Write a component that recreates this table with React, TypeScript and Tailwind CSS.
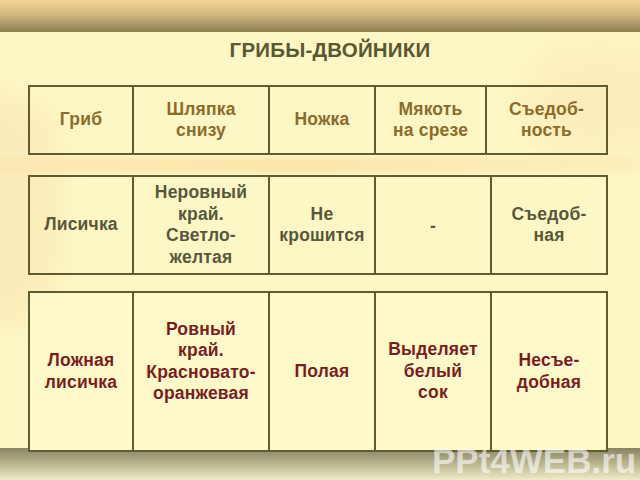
import React from "react";

const font = { fontFamily: '"Liberation Sans", Arial, sans-serif' };

type Cell = { lines: string[]; extra?: string };

function Table({
  cols,
  cells,
  height,
  color,
  extraClass,
}: {
  cols: string;
  cells: Cell[];
  height: string;
  color: string;
  extraClass?: string;
}) {
  return (
    <div
      className={`relative z-10 ml-[28px] w-[580px] border-2 border-[#5e5c30] grid ${cols} ${height} ${extraClass ?? ""}`}
    >
      {cells.map((c, i) => (
        <div
          key={i}
          className={`flex items-center justify-center text-center text-[17.5px] leading-[21.5px] font-bold tracking-[0.2px] ${color} ${
            i < cells.length - 1 ? "border-r-2 border-[#5e5c30]" : ""
          } ${c.extra ?? ""}`}
        >
          <div>
            {c.lines.map((l, j) => (
              <div key={j}>{l}</div>
            ))}
          </div>
        </div>
      ))}
    </div>
  );
}

export default function App() {
  return (
    <div
      className="relative w-[640px] h-[480px] overflow-hidden bg-[#fdf7c6] flex flex-col"
      style={font}
    >
      {/* decorative background swirls */}
      <div className="absolute left-0 top-[157px] w-[640px] h-[16px] bg-gradient-to-r from-[#fde6ad] via-[#fbe3a4] to-[#fdf0bd] opacity-80 blur-[2px]" />
      <div className="absolute left-[-60px] top-[90px] w-[120px] h-[240px] rounded-full bg-[#fbe7b2] opacity-60 blur-[12px]" />
      <div className="absolute left-[520px] top-[40px] w-[160px] h-[120px] rounded-full bg-[#fbe7b2] opacity-50 blur-[16px]" />

      {/* top bar */}
      <div className="relative z-10 h-[32px] shrink-0 bg-gradient-to-b from-[#f3d594] via-[#cdb37b] to-[#8c7e52]" />

      {/* title */}
      <div className="relative z-10 mt-[6px] h-[24px] pl-[20px] text-center text-[20.5px] leading-[24px] font-bold tracking-[0.2px] text-[#5a5830]">
        ГРИБЫ-ДВОЙНИКИ
      </div>

      <div className="mt-[23px]" />
      <Table
        cols="grid-cols-[104px_136px_106px_111px_119px]"
        height="h-[70px]"
        color="text-[#8b6b2b]"
        cells={[
          { lines: ["Гриб"] },
          { lines: ["Шляпка", "снизу"] },
          { lines: ["Ножка"] },
          { lines: ["Мякоть", "на срезе"] },
          { lines: ["Съедоб-", "ность"] },
        ]}
      />

      <div className="mt-[20px]" />
      <Table
        cols="grid-cols-[104px_136px_106px_116px_114px]"
        height="h-[100px]"
        color="text-[#58573a]"
        cells={[
          { lines: ["Лисичка"] },
          { lines: ["Неровный", "край.", "Светло-", "желтая"] },
          { lines: ["Не", "крошится"] },
          { lines: ["-"], extra: "pt-[4px]" },
          { lines: ["Съедоб-", "ная"] },
        ]}
      />

      <div className="mt-[16px]" />
      <Table
        cols="grid-cols-[104px_136px_106px_116px_114px]"
        height="h-[161px]"
        color="text-[#7b1d12] [text-shadow:0_1px_1px_rgba(255,255,255,0.9)]"
        extraClass="bg-[#fdf9c8] mb-[-4px]"
        cells={[
          { lines: ["Ложная", "лисичка"] },
          { lines: ["Ровный", "край.", "Красновато-", "оранжевая"], extra: "pb-[20px]" },
          { lines: ["Полая"] },
          { lines: ["Выделяет", "белый", "сок"] },
          { lines: ["Несъе-", "добная"] },
        ]}
      />

      {/* bottom bar */}
      <div className="relative h-[32px] shrink-0 bg-gradient-to-b from-[#898563] via-[#b9b690] to-[#efedc9]" />

      {/* watermark */}
      <div className="absolute z-20 left-[432px] top-[441px] text-[35px] leading-[40px] font-bold text-white/60">
        PPt4WEB.ru
      </div>
    </div>
  );
}
